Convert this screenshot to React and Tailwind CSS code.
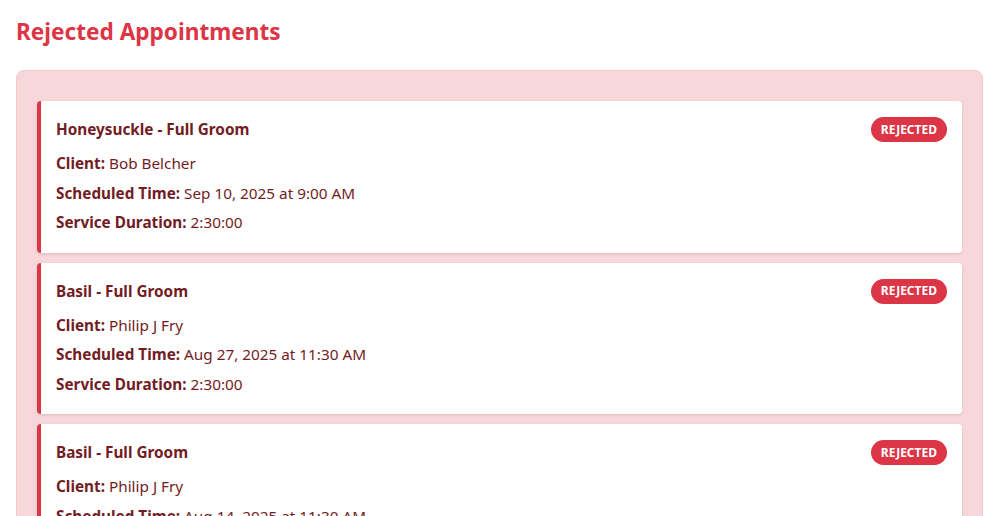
import React from 'react'

const appointments = [
  { pet: 'Honeysuckle', service: 'Full Groom', client: 'Bob Belcher', time: 'Sep 10, 2025 at 9:00 AM', duration: '2:30:00' },
  { pet: 'Basil', service: 'Full Groom', client: 'Philip J Fry', time: 'Aug 27, 2025 at 11:30 AM', duration: '2:30:00' },
  { pet: 'Basil', service: 'Full Groom', client: 'Philip J Fry', time: 'Aug 14, 2025 at 11:30 AM', duration: '2:30:00' },
]

function Row({ label, value }) {
  return (
    <p className="text-[15.3px] leading-6 mb-[5.5px]">
      <span className="font-bold">{label}:</span> {value}
    </p>
  )
}

function AppointmentCard({ appt }) {
  return (
    <div className="bg-white rounded border-l-4 border-[#dc3545] pt-4 pb-[13px] px-[15px] shadow-[0_1px_3px_rgba(0,0,0,0.12)] text-[#721c24]">
      <div className="flex items-center justify-between mb-[9px]">
        <h3 className="text-[15.3px] font-bold">{appt.pet} - {appt.service}</h3>
        <span className="bg-[#dc3545] text-white text-[12px] font-bold rounded-full h-[25px] px-[10px] flex items-center">REJECTED</span>
      </div>
      <Row label="Client" value={appt.client} />
      <Row label="Scheduled Time" value={appt.time} />
      <Row label="Service Duration" value={appt.duration} />
    </div>
  )
}

export default function App() {
  return (
    <div className="min-h-screen bg-white pl-4 pr-3 pt-[16px]" style={{ fontFamily: '"Noto Sans", "Open Sans", sans-serif' }}>
      <h2 className="text-[22.6px] font-bold text-[#dc3545] leading-8 mb-[22px]">Rejected Appointments</h2>
      <div className="bg-[#f8d7da] border border-[#f5c6cb] rounded-lg px-5 pt-[30px] pb-5 flex flex-col gap-[10px]">
        {appointments.map((a, i) => (
          <AppointmentCard key={i} appt={a} />
        ))}
      </div>
    </div>
  )
}
